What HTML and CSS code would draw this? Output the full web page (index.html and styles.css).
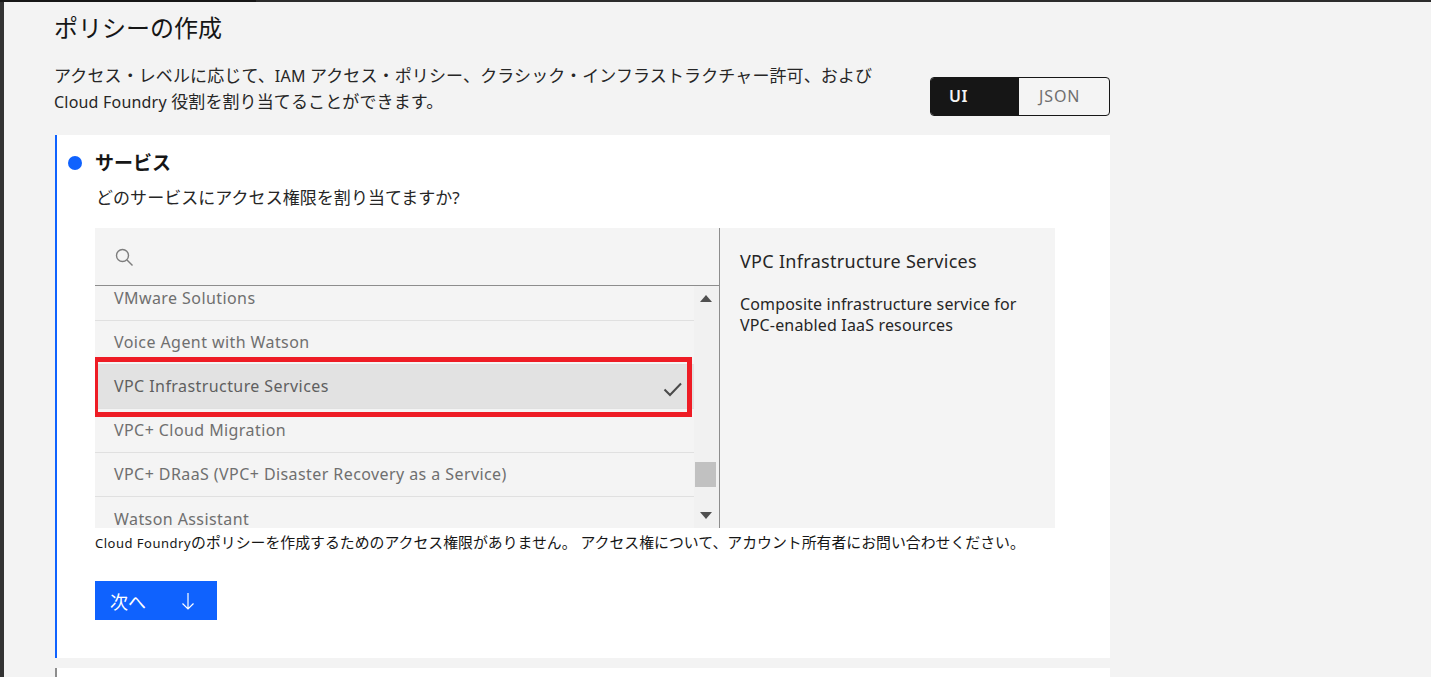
FILE: index.html
```html
<!DOCTYPE html>
<html lang="ja">
<head>
<meta charset="utf-8">
<title>ポリシーの作成</title>
<link rel="stylesheet" href="styles.css">
</head>
<body>
<div class="topbar"><span class="topbar-dark"></span></div>
<div class="shell">
  <aside class="edge"></aside>
  <main class="main">
    <h1 class="title">ポリシーの作成</h1>
    <div class="intro">
      <p class="intro-text">アクセス・レベルに応じて、<span class="latin">IAM </span>アクセス・ポリシー、クラシック・インフラストラクチャー許可、および<br><span class="latin">Cloud Foundry </span>役割を割り当てることができます。</p>
      <div class="toggle">
        <button class="toggle-btn toggle-on">UI</button>
        <button class="toggle-btn">JSON</button>
      </div>
    </div>
    <section class="card card-active">
      <div class="step">
        <span class="dot"></span>
        <h2 class="step-title">サービス</h2>
      </div>
      <div class="step-body">
        <p class="question">どのサービスにアクセス権限を割り当てますか?</p>
        <div class="picker">
          <div class="picker-left">
            <div class="search">
              <svg class="search-icon" width="20" height="20" viewBox="0 0 20 20" fill="none" stroke="#7d7d7d" stroke-width="1.4"><circle cx="8.5" cy="8.5" r="6"/><path d="M13 13l5.500 5.500"/></svg>
            </div>
            <div class="list-wrap">
              <ul class="list">
                <li class="row">VMware Solutions</li>
                <li class="row">Voice Agent with Watson</li>
                <li class="row row-selected">VPC Infrastructure Services
                  <svg class="check" width="20" height="16" viewBox="0 0 20 16" fill="none" stroke="#4a4a4a" stroke-width="2"><path d="M1.500 8.500l5.500 5.500L18 2.500"/></svg>
                  <span class="highlight"></span>
                </li>
                <li class="row">VPC+ Cloud Migration</li>
                <li class="row">VPC+ DRaaS (VPC+ Disaster Recovery as a Service)</li>
                <li class="row">Watson Assistant</li>
              </ul>
              <div class="scrollbar">
                <span class="arrow arrow-up"></span>
                <span class="thumb"></span>
                <span class="arrow arrow-down"></span>
              </div>
            </div>
          </div>
          <div class="detail">
            <h3 class="detail-title">VPC Infrastructure Services</h3>
            <p class="detail-text">Composite infrastructure service for VPC-enabled IaaS resources</p>
          </div>
        </div>
        <p class="note"><span class="latin">Cloud Foundry</span>のポリシーを作成するためのアクセス権限がありません。 アクセス権について、アカウント所有者にお問い合わせください。</p>
        <button class="next">次へ
          <svg width="16" height="20" viewBox="0 0 16 20" fill="none" stroke="#fff" stroke-width="1.2"><path d="M8 2v16M2.500 12.500L8 18l5.500-5.500"/></svg>
        </button>
      </div>
    </section>
    <section class="card card-next"></section>
  </main>
</div>
</body>
</html>
```
FILE: styles.css
```css
* { box-sizing: border-box; }
html, body { margin: 0; padding: 0; height: 100%; overflow: hidden; }
body {
  background: #f3f3f3;
  color: #161616;
  font-family: "Noto Sans", "Noto Sans CJK JP", sans-serif;
}
.topbar { height: 2px; background: #2b2b2b; }
.topbar-dark { display: block; width: 256px; height: 2px; background: #161616; }
.shell { display: flex; }
.edge { width: 4px; flex: none; height: 675px; background: #333; }
.main { width: 1055px; margin-left: 51px; }
.title { margin: 0 0 0 -1px; padding-top: 10px; font-size: 24px; line-height: 32px; font-weight: 400; }
.intro { display: flex; justify-content: space-between; align-items: flex-start; margin-top: 19px; }
.intro-text { margin: 0 0 0 -1px; font-size: 17px; line-height: 26px; letter-spacing: .12px; color: #262626; }
.latin { font-size: 16px; letter-spacing: .2px; }
.toggle { display: flex; width: 180px; height: 39px; margin-top: 14px; border: 1px solid #161616; border-radius: 4px; overflow: hidden; background: #f4f4f4; }
.toggle-btn { flex: 1; padding: 0 0 1px 18px; border: 0; background: none; text-align: left; font: inherit; font-size: 16px; letter-spacing: .5px; color: #6f6f6f; }
.toggle-btn + .toggle-btn { padding-left: 20px; letter-spacing: .9px; }
.toggle-on { background: #161616; color: #f4f4f4; font-weight: 600; }
.card { background: #fff; margin-top: 19px; }
.card-active { height: 523px; border-left: 2px solid #0f62fe; }
.card-next { height: 20px; margin-top: 10px; border-left: 2px solid #8d8d8d; }
.step { display: flex; align-items: center; padding: 15px 0 0 11px; }
.dot { width: 14px; height: 14px; border-radius: 50%; background: #0f62fe; }
.step-title { margin: 0 0 0 13px; font-size: 19px; line-height: 26px; font-weight: 700; }
.step-body { padding-left: 38px; }
.question { margin: 9px 0 0 1px; font-size: 17px; line-height: 26px; letter-spacing: .05px; color: #262626; }
.picker { display: flex; width: 960px; height: 300px; margin-top: 17px; background: #f4f4f4; }
.picker-left { width: 625px; flex: none; border-right: 1px solid #8d8d8d; display: flex; flex-direction: column; }
.search { height: 58px; flex: none; border-bottom: 1px solid #8d8d8d; padding: 19px 0 0 19px; }
.search-icon { display: block; }
.list-wrap { flex: 1; display: flex; min-height: 0; }
.list { flex: 1; list-style: none; margin: 0; padding: 0; height: 242px; overflow: hidden; font-size: 16px; letter-spacing: .42px; color: #6f6f6f; }
.row { position: relative; display: flex; align-items: center; justify-content: space-between; height: 44.1px; padding: 0 11px 1px 19px; border-bottom: 1px solid #e0e0e0; }
.row:first-child { margin-top: -9px; }
.row-selected { background: #e2e2e2; color: #5f5f5f; }
.check { margin-top: 6px; }
.highlight { position: absolute; left: -2px; top: -8px; width: 599px; height: 60px; border: 5px solid #ee1c25; pointer-events: none; }
.scrollbar { width: 25px; flex: none; background: #f1f1f1; display: flex; flex-direction: column; align-items: center; position: relative; }
.arrow { position: absolute; left: 6px; width: 0; height: 0; border-left: 6px solid transparent; border-right: 6px solid transparent; }
.arrow-up { top: 9px; border-bottom: 7px solid #505050; }
.arrow-down { bottom: 9px; border-top: 7px solid #505050; }
.thumb { position: absolute; top: 176px; left: 1px; width: 21px; height: 25px; background: #c1c1c1; }
.detail { flex: 1; padding: 20px 20px; }
.detail-title { margin: 0; font-size: 18px; line-height: 26px; font-weight: 400; letter-spacing: .3px; color: #262626; }
.detail-text { margin: 20px 0 0; font-size: 16px; line-height: 21px; letter-spacing: .16px; color: #262626; }
.note { margin: 5px 0 0; font-size: 14.88px; line-height: 18px; color: #161616; }
.note .latin { font-size: 13px; letter-spacing: .5px; }
.next { display: flex; align-items: center; width: 122px; height: 39px; margin-top: 29px; padding: 0 0 0 15px; border: 0; background: #0f62fe; color: #fff; font: inherit; font-size: 18px; gap: 34px; }
```
